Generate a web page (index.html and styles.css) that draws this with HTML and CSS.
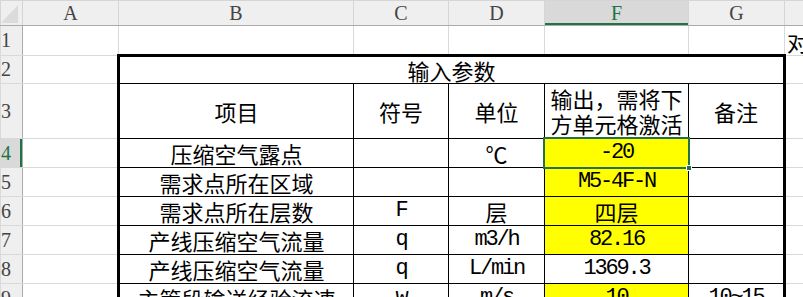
FILE: index.html
```html
<!DOCTYPE html>
<html lang="zh-CN">
<head>
    <meta charset="UTF-8">
    <meta name="viewport" content="width=device-width, initial-scale=1.0">
    <title>压缩空气计算</title>
    <link rel="stylesheet" href="styles.css">
</head>
<body>
    <table class="sheet">
        <colgroup>
            <col class="col-hdr">
            <col class="col-a">
            <col class="col-b">
            <col class="col-c">
            <col class="col-d">
            <col class="col-f">
            <col class="col-g">
            <col class="col-h">
        </colgroup>
        <thead>
            <tr class="col-head">
                <th class="corner"><span class="corner-tri"></span></th>
                <th>A</th>
                <th>B</th>
                <th>C</th>
                <th>D</th>
                <th class="picked">F</th>
                <th>G</th>
                <th></th>
            </tr>
        </thead>
        <tbody>
            <tr>
                <th class="row-head">1</th>
                <td></td><td></td><td></td><td></td><td></td><td></td>
                <td class="spill">对</td>
            </tr>
            <tr class="title-row">
                <th class="row-head">2</th>
                <td></td>
                <td class="box top-edge left-edge right-edge" colspan="5">输入参数</td>
                <td></td>
            </tr>
            <tr class="tall">
                <th class="row-head">3</th>
                <td></td>
                <td class="box left-edge">项目</td>
                <td class="box">符号</td>
                <td class="box">单位</td>
                <td class="box wrap">输出，需将下<br>方单元格激活</td>
                <td class="box right-edge">备注</td>
                <td></td>
            </tr>
            <tr>
                <th class="row-head picked">4</th>
                <td></td>
                <td class="box left-edge">压缩空气露点</td>
                <td class="box"></td>
                <td class="box">℃</td>
                <td class="box fill lat active">-20</td>
                <td class="box right-edge"></td>
                <td></td>
            </tr>
            <tr>
                <th class="row-head">5</th>
                <td></td>
                <td class="box left-edge">需求点所在区域</td>
                <td class="box"></td>
                <td class="box"></td>
                <td class="box fill lat">M5-4F-N</td>
                <td class="box right-edge"></td>
                <td></td>
            </tr>
            <tr>
                <th class="row-head">6</th>
                <td></td>
                <td class="box left-edge">需求点所在层数</td>
                <td class="box lat">F</td>
                <td class="box">层</td>
                <td class="box fill">四层</td>
                <td class="box right-edge"></td>
                <td></td>
            </tr>
            <tr>
                <th class="row-head">7</th>
                <td></td>
                <td class="box left-edge">产线压缩空气流量</td>
                <td class="box lat">q</td>
                <td class="box lat">m3/h</td>
                <td class="box fill lat">82.16</td>
                <td class="box right-edge"></td>
                <td></td>
            </tr>
            <tr>
                <th class="row-head">8</th>
                <td></td>
                <td class="box left-edge">产线压缩空气流量</td>
                <td class="box lat">q</td>
                <td class="box lat">L/min</td>
                <td class="box lat">1369.3</td>
                <td class="box right-edge"></td>
                <td></td>
            </tr>
            <tr>
                <th class="row-head">9</th>
                <td></td>
                <td class="box left-edge">主管段输送经验流速</td>
                <td class="box lat">w</td>
                <td class="box lat">m/s</td>
                <td class="box fill lat">10</td>
                <td class="box lat right-edge">10~15</td>
                <td></td>
            </tr>
        </tbody>
    </table>
</body>
</html>
```

FILE: styles.css
```css
body {
    margin: 0;
    padding: 0;
    width: 803px;
    height: 297px;
    overflow: hidden;
    background-color: white;
}

/* Spreadsheet grid */
.sheet {
    border-collapse: collapse;
    table-layout: fixed;
    width: 844px;
    font-family: "Noto Sans CJK SC", sans-serif;
    font-size: 22px;
    color: black;
}

.col-hdr { width: 22px; }
.col-a { width: 96px; }
.col-b { width: 235px; }
.col-c { width: 95px; }
.col-d { width: 96px; }
.col-f { width: 144px; }
.col-g { width: 96px; }
.col-h { width: 60px; }

.sheet td {
    height: 28px;
    padding: 0 2px;
    border: 1px solid #d9d9d9;
    text-align: center;
    vertical-align: middle;
    line-height: 26px;
    white-space: nowrap;
    overflow: visible;
}

.sheet tr.title-row td {
    height: 26px;
}

.sheet tr.tall td {
    height: 54px;
}

/* Column letters and row numbers */
.col-head th {
    height: 24px;
    padding: 0;
    background-color: #efefef;
    border: 1px solid #d5d5d5;
    border-bottom: 1px solid #ababab;
    font-family: "Liberation Serif", serif;
    font-weight: normal;
    font-size: 20px;
    color: #444;
    line-height: 24px;
}

.col-head th.picked {
    background-color: #d9d9d9;
    color: #217346;
    box-shadow: inset 0 -2px 0 #217346;
}

.corner {
    position: relative;
}

.corner-tri {
    position: absolute;
    left: 0;
    top: 4px;
    width: 0;
    height: 0;
    border-left: 17px solid transparent;
    border-bottom: 18px solid #dbdbdb;
}

.row-head {
    padding: 0 15px 0 0;
    background-color: #efefef;
    border: 1px solid #d9d9d9;
    border-right: 1px solid #ababab;
    font-family: "Liberation Serif", serif;
    font-weight: normal;
    font-size: 20px;
    color: #444;
    text-align: right;
    overflow: hidden;
    white-space: nowrap;
}

.row-head.picked {
    background-color: #d9d9d9;
    color: #217346;
    box-shadow: inset -2px 0 0 #217346;
}

/* The bordered input table */
.sheet td.box {
    border: 1px solid black;
}

.sheet td.top-edge { border-top: 3px solid black; }
.sheet td.left-edge { border-left: 3px solid black; }
.sheet td.right-edge { border-right: 3px solid black; }

.sheet td.wrap {
    line-height: 25px;
}

.sheet td.fill {
    background-color: #ffff00;
}

.lat {
    font-family: "Liberation Mono", monospace;
    letter-spacing: -2.2px;
}

.spill {
    text-align: left !important;
    padding-left: 4px;
}

/* Selected cell with the fill handle */
.active {
    position: relative;
}

.active::before {
    content: '';
    position: absolute;
    left: -2px;
    top: -2px;
    right: -2px;
    bottom: -2px;
    border: 2px solid #217346;
}

.active::after {
    content: '';
    position: absolute;
    right: -4px;
    bottom: -4px;
    width: 6px;
    height: 6px;
    background-color: #217346;
    border: 1px solid white;
    box-sizing: border-box;
}
```
